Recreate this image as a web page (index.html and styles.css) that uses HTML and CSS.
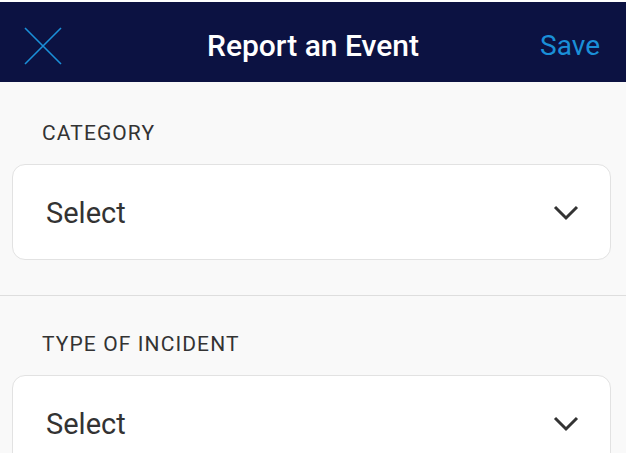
FILE: index.html
```html
<!DOCTYPE html>
<html>
<head>
<meta charset="utf-8">
<link rel="stylesheet" href="styles.css">
</head>
<body>
<div class="screen">
  <header class="nav">
    <div class="nav-left">
      <svg class="close" width="38" height="38" viewBox="0 0 38 38">
        <path d="M1 1 L37 37 M37 1 L1 37" stroke="#1a8fd8" stroke-width="1.6" fill="none"/>
      </svg>
    </div>
    <h1 class="title">Report an Event</h1>
    <div class="nav-right"><span class="save">Save</span></div>
  </header>
  <main class="form">
    <section class="field first">
      <div class="label">CATEGORY</div>
      <div class="select">
        <span class="value">Select</span>
        <svg class="chev" width="26" height="16" viewBox="0 0 26 16">
          <path d="M2 2 L13 13 L24 2" stroke="#333" stroke-width="3" fill="none"/>
        </svg>
      </div>
    </section>
    <section class="field second">
      <div class="label">TYPE OF INCIDENT</div>
      <div class="select">
        <span class="value">Select</span>
        <svg class="chev" width="26" height="16" viewBox="0 0 26 16">
          <path d="M2 2 L13 13 L24 2" stroke="#333" stroke-width="3" fill="none"/>
        </svg>
      </div>
    </section>
  </main>
</div>
</body>
</html>
```
FILE: styles.css
```css
html, body {
  margin: 0;
  padding: 0;
  background: #ffffff;
}
.screen {
  margin-top: 2px;
  width: 626px;
  height: 451px;
  overflow: hidden;
  background: #f9f9f9;
  font-family: Roboto, "Liberation Sans", sans-serif;
  display: flex;
  flex-direction: column;
}
.nav {
  height: 80px;
  flex: none;
  box-sizing: border-box;
  padding-top: 7px;
  background: #0c1242;
  display: grid;
  grid-template-columns: 1fr auto 1fr;
  align-items: center;
}
.nav-left {
  padding-left: 24px;
  display: flex;
  align-items: center;
}
.close {
  display: block;
}
.title {
  margin: 0;
  color: #ffffff;
  font-size: 30px;
  font-weight: 500;
  line-height: 36px;
}
.nav-right {
  display: flex;
  justify-content: flex-end;
  padding-right: 26px;
}
.save {
  color: #1a8fd8;
  font-size: 28px;
  line-height: 36px;
}
.form {
  flex: 1;
}
.field {
  padding: 36px 15px 35px 12px;
}
.field.first {
  padding-top: 39px;
}
.field.second {
  border-top: 1px solid #dedede;
}
.label {
  margin-left: 30px;
  font-size: 21px;
  line-height: 24px;
  letter-spacing: 1.1px;
  color: #333333;
}
.select {
  margin-top: 19px;
  height: 96px;
  box-sizing: border-box;
  background: #ffffff;
  border: 1px solid #e2e2e2;
  border-radius: 13px;
  display: flex;
  align-items: center;
  justify-content: space-between;
  padding: 2px 31px 0 33px;
}
.value {
  font-size: 29px;
  color: #333333;
}
.chev {
  display: block;
}
```
